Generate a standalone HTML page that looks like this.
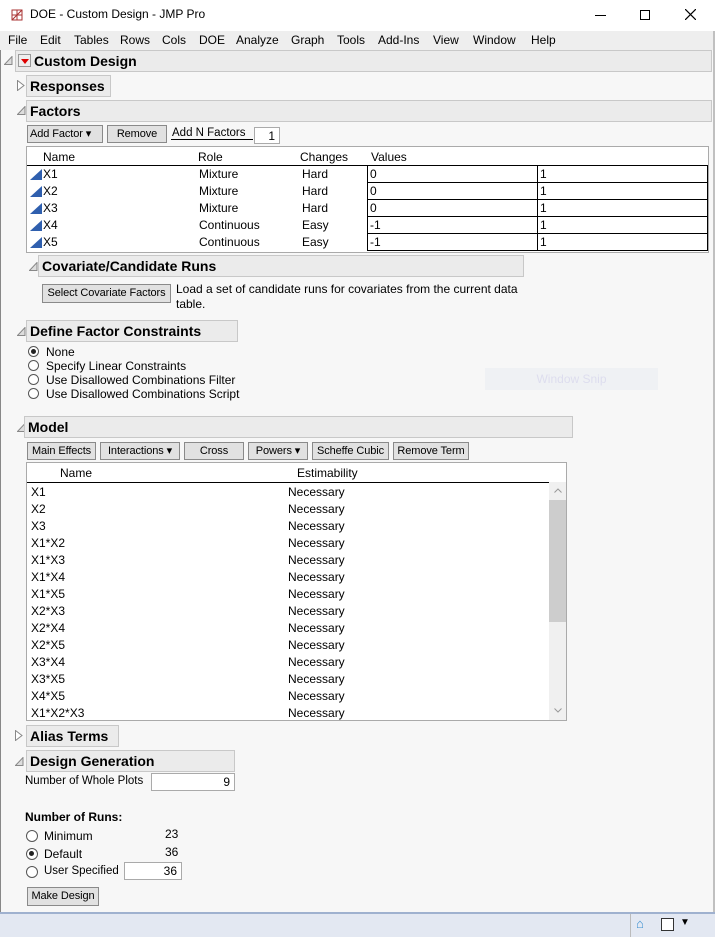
<!DOCTYPE html>
<html><head><meta charset="utf-8"><style>
*{margin:0;padding:0;box-sizing:border-box}
body{width:715px;height:937px;overflow:hidden;background:#f7f7f7;font-family:"Liberation Sans",sans-serif;font-size:12px;color:#000;position:relative}
.a{position:absolute;white-space:nowrap}
.hdr{position:absolute;background:#ebebeb;border:1px solid #c8c8c8;font-weight:bold;font-size:14px;padding-left:3px;line-height:19px;white-space:nowrap}
.btn{position:absolute;background:#e1e1e1;border:1px solid #8a8a8a;line-height:16px;text-align:center;font-size:11px;white-space:nowrap;overflow:hidden;letter-spacing:-0.1px}
.inp{position:absolute;background:#fff;border:1px solid #aaa;text-align:right;padding-right:4px;line-height:16px}
.rad{position:absolute;width:11px;height:11px;border:1px solid #555;border-radius:50%;background:#fff}
.rad.on::after{content:"";position:absolute;left:2px;top:2px;width:5px;height:5px;border-radius:50%;background:#222}
.tg{position:absolute}
</style></head><body>
<div class="a" style="left:0;top:0;width:715px;height:31px;background:#fff"></div>
<svg class="a" style="left:10px;top:8px" width="14" height="14" viewBox="0 0 14 14"><rect x="2" y="2" width="10" height="10" fill="none" stroke="#a33" stroke-width="1"/><path d="M2 7h10M7 2v10M2 12L12 2" stroke="#a33" fill="none"/></svg>
<div class="a" style="left:30px;top:7px;font-size:12px">DOE - Custom Design - JMP Pro</div>
<div class="a" style="left:595px;top:15px;width:11px;height:1px;background:#000"></div>
<div class="a" style="left:640px;top:10px;width:10px;height:10px;border:1px solid #000"></div>
<svg class="a" style="left:685px;top:9px" width="11" height="11"><path d="M0 0L11 11M11 0L0 11" stroke="#000" stroke-width="1.2"/></svg>
<div class="a" style="left:0;top:31px;width:715px;height:19px;background:#eeeeee"></div>
<div class="a" style="left:8px;top:33px">File</div>
<div class="a" style="left:40px;top:33px">Edit</div><div class="a" style="left:74px;top:33px">Tables</div><div class="a" style="left:120px;top:33px">Rows</div><div class="a" style="left:162px;top:33px">Cols</div><div class="a" style="left:199px;top:33px">DOE</div><div class="a" style="left:236px;top:33px">Analyze</div><div class="a" style="left:291px;top:33px">Graph</div><div class="a" style="left:337px;top:33px">Tools</div><div class="a" style="left:378px;top:33px">Add-Ins</div><div class="a" style="left:433px;top:33px">View</div><div class="a" style="left:473px;top:33px">Window</div><div class="a" style="left:531px;top:33px">Help</div>
<div class="a" style="left:713px;top:31px;width:2px;height:882px;background:#c0c0c0"></div>
<div class="a" style="left:0;top:50px;width:1px;height:863px;background:#888"></div>

<svg class="tg" style="left:4px;top:56px" width="9" height="9"><path d="M8 0.5V8.5H0.5Z" fill="#ddd" stroke="#888"/></svg>
<div class="hdr" style="left:15px;top:50px;width:697px;height:22px;padding-left:18px;line-height:20px">Custom Design</div>
<div class="a" style="left:18px;top:54px;width:13px;height:13px;border:1px solid #999;background:#eee"><div style="margin:4px 0 0 2px;width:0;height:0;border-left:4px solid transparent;border-right:4px solid transparent;border-top:5px solid #d00"></div></div>

<svg class="tg" style="left:17px;top:80px" width="8" height="11"><path d="M0.5 0.5L7 5.5L0.5 10.5Z" fill="#fff" stroke="#888"/></svg>
<div class="hdr" style="left:26px;top:75px;width:85px;height:22px;line-height:20px">Responses</div>
<svg class="tg" style="left:17px;top:106px" width="9" height="9"><path d="M8 0.5V8.5H0.5Z" fill="#ddd" stroke="#888"/></svg>
<div class="hdr" style="left:26px;top:100px;width:686px;height:22px;line-height:20px">Factors</div>

<div class="btn" style="left:27px;top:125px;width:76px;height:18px;text-align:left;padding-left:2px">Add Factor ▾</div>
<div class="btn" style="left:107px;top:125px;width:60px;height:18px">Remove</div>
<div class="a" style="left:171px;top:127px;border-bottom:1px solid #000;width:82px;padding-left:1px;font-size:11.5px">Add N Factors</div>
<div class="inp" style="left:254px;top:127px;width:26px;height:17px">1</div>

<div class="a" style="left:26px;top:146px;width:683px;height:107px;background:#fff;border:1px solid #aaa"></div>
<div class="a" style="left:43px;top:150px">Name</div><div class="a" style="left:198px;top:150px">Role</div><div class="a" style="left:300px;top:150px">Changes</div><div class="a" style="left:371px;top:150px">Values</div>
<div class="a" style="left:27px;top:165px;width:681px;height:1px;background:#000"></div>
<div class="a" style="left:30px;top:166px;line-height:17px">
<div style="position:relative;height:17px"><span style="position:absolute;left:0;top:3px;width:0;height:0;border-left:12px solid transparent;border-bottom:11px solid #2f5fae"></span><span style="position:absolute;left:13px">X1</span><span style="position:absolute;left:169px">Mixture</span><span style="position:absolute;left:272px">Hard</span></div>
<div style="position:relative;height:17px"><span style="position:absolute;left:0;top:3px;width:0;height:0;border-left:12px solid transparent;border-bottom:11px solid #2f5fae"></span><span style="position:absolute;left:13px">X2</span><span style="position:absolute;left:169px">Mixture</span><span style="position:absolute;left:272px">Hard</span></div>
<div style="position:relative;height:17px"><span style="position:absolute;left:0;top:3px;width:0;height:0;border-left:12px solid transparent;border-bottom:11px solid #2f5fae"></span><span style="position:absolute;left:13px">X3</span><span style="position:absolute;left:169px">Mixture</span><span style="position:absolute;left:272px">Hard</span></div>
<div style="position:relative;height:17px"><span style="position:absolute;left:0;top:3px;width:0;height:0;border-left:12px solid transparent;border-bottom:11px solid #2f5fae"></span><span style="position:absolute;left:13px">X4</span><span style="position:absolute;left:169px">Continuous</span><span style="position:absolute;left:272px">Easy</span></div>
<div style="position:relative;height:17px"><span style="position:absolute;left:0;top:3px;width:0;height:0;border-left:12px solid transparent;border-bottom:11px solid #2f5fae"></span><span style="position:absolute;left:13px">X5</span><span style="position:absolute;left:169px">Continuous</span><span style="position:absolute;left:272px">Easy</span></div>
</div>
<div class="a" style="left:367px;top:165px;width:341px;height:86px;border:1px solid #000;border-top:0"></div>
<div class="a" style="left:537px;top:165px;width:1px;height:86px;background:#000"></div>
<div class="a" style="left:367px;top:182px;width:341px;height:1px;background:#000"></div>
<div class="a" style="left:367px;top:199px;width:341px;height:1px;background:#000"></div>
<div class="a" style="left:367px;top:216px;width:341px;height:1px;background:#000"></div>
<div class="a" style="left:367px;top:233px;width:341px;height:1px;background:#000"></div>
<div class="a" style="left:370px;top:166px;line-height:17px">0<br>0<br>0<br>-1<br>-1</div>
<div class="a" style="left:540px;top:166px;line-height:17px">1<br>1<br>1<br>1<br>1</div>

<svg class="tg" style="left:29px;top:262px" width="9" height="9"><path d="M8 0.5V8.5H0.5Z" fill="#ddd" stroke="#888"/></svg>
<div class="hdr" style="left:38px;top:255px;width:486px;height:22px;line-height:20px">Covariate/Candidate Runs</div>
<div class="btn" style="left:42px;top:284px;width:129px;height:19px;line-height:17px">Select Covariate Factors</div>
<div class="a" style="left:176px;top:282px;line-height:15px">Load a set of candidate runs for covariates from the current data<br>table.</div>

<svg class="tg" style="left:17px;top:327px" width="9" height="9"><path d="M8 0.5V8.5H0.5Z" fill="#ddd" stroke="#888"/></svg>
<div class="hdr" style="left:26px;top:320px;width:212px;height:22px;line-height:20px">Define Factor Constraints</div>
<div class="rad on" style="left:28px;top:346px"></div><div class="a" style="left:46px;top:345px">None</div>
<div class="rad" style="left:28px;top:360px"></div><div class="a" style="left:46px;top:359px">Specify Linear Constraints</div>
<div class="rad" style="left:28px;top:374px"></div><div class="a" style="left:46px;top:373px">Use Disallowed Combinations Filter</div>
<div class="rad" style="left:28px;top:388px"></div><div class="a" style="left:46px;top:387px">Use Disallowed Combinations Script</div>
<div class="a" style="left:485px;top:368px;width:173px;height:22px;background:#eff1f4;color:#dde;line-height:22px;text-align:center">Window Snip</div>

<svg class="tg" style="left:17px;top:423px" width="9" height="9"><path d="M8 0.5V8.5H0.5Z" fill="#ddd" stroke="#888"/></svg>
<div class="hdr" style="left:24px;top:416px;width:549px;height:22px;line-height:20px">Model</div>
<div class="btn" style="left:27px;top:442px;width:69px;height:18px">Main Effects</div>
<div class="btn" style="left:100px;top:442px;width:80px;height:18px">Interactions ▾</div>
<div class="btn" style="left:184px;top:442px;width:60px;height:18px">Cross</div>
<div class="btn" style="left:248px;top:442px;width:60px;height:18px">Powers ▾</div>
<div class="btn" style="left:312px;top:442px;width:77px;height:18px">Scheffe Cubic</div>
<div class="btn" style="left:393px;top:442px;width:76px;height:18px">Remove Term</div>

<div class="a" style="left:26px;top:462px;width:541px;height:259px;background:#fff;border:1px solid #aaa;overflow:hidden">
<div class="a" style="left:33px;top:3px">Name</div><div class="a" style="left:270px;top:3px">Estimability</div>
<div class="a" style="left:0;top:19px;width:522px;height:1px;background:#000"></div>
<div class="a" style="left:4px;top:21px;line-height:17px">X1<br>X2<br>X3<br>X1*X2<br>X1*X3<br>X1*X4<br>X1*X5<br>X2*X3<br>X2*X4<br>X2*X5<br>X3*X4<br>X3*X5<br>X4*X5<br>X1*X2*X3</div>
<div class="a" style="left:261px;top:21px;line-height:17px">Necessary<br>Necessary<br>Necessary<br>Necessary<br>Necessary<br>Necessary<br>Necessary<br>Necessary<br>Necessary<br>Necessary<br>Necessary<br>Necessary<br>Necessary<br>Necessary</div>
<div class="a" style="left:522px;top:19px;width:17px;height:240px;background:#f0f0f0"></div>
<div class="a" style="left:522px;top:37px;width:17px;height:122px;background:#cdcdcd"></div>
<svg class="a" style="left:527px;top:25px" width="8" height="5"><path d="M0.5 4.5L4 1L7.5 4.5" stroke="#999" fill="none"/></svg>
<svg class="a" style="left:527px;top:245px" width="8" height="5"><path d="M0.5 0.5L4 4L7.5 0.5" stroke="#999" fill="none"/></svg>
</div>

<svg class="tg" style="left:15px;top:730px" width="8" height="11"><path d="M0.5 0.5L7 5.5L0.5 10.5Z" fill="#fff" stroke="#888"/></svg>
<div class="hdr" style="left:26px;top:725px;width:93px;height:22px;line-height:20px">Alias Terms</div>
<svg class="tg" style="left:15px;top:757px" width="9" height="9"><path d="M8 0.5V8.5H0.5Z" fill="#ddd" stroke="#888"/></svg>
<div class="hdr" style="left:26px;top:750px;width:209px;height:22px;line-height:20px">Design Generation</div>
<div class="a" style="left:25px;top:775px;font-size:11.5px">Number of Whole Plots</div>
<div class="inp" style="left:151px;top:773px;width:84px;height:18px">9</div>
<div class="a" style="left:25px;top:810px;font-weight:bold">Number of Runs:</div>
<div class="rad" style="left:26px;top:830px;width:12px;height:12px"></div><div class="a" style="left:44px;top:829px">Minimum</div><div class="a" style="left:165px;top:827px">23</div>
<div class="rad on" style="left:26px;top:848px;width:12px;height:12px"></div><div class="a" style="left:44px;top:847px">Default</div><div class="a" style="left:165px;top:845px">36</div>
<div class="rad" style="left:26px;top:866px;width:12px;height:12px"></div><div class="a" style="left:44px;top:865px;font-size:11.5px">User Specified</div>
<div class="inp" style="left:124px;top:862px;width:58px;height:18px">36</div>
<div class="btn" style="left:27px;top:887px;width:72px;height:19px;line-height:17px">Make Design</div>

<div class="a" style="left:0;top:912px;width:715px;height:2px;background:#9fb1cf"></div>
<div class="a" style="left:0;top:914px;width:715px;height:23px;background:#e3e8f2"></div>
<div class="a" style="left:630px;top:914px;width:1px;height:23px;background:#bbb"></div>
<div class="a" style="left:636px;top:916px;color:#3a8fd0;font-size:13px">⌂</div>
<div class="a" style="left:661px;top:918px;width:13px;height:13px;background:#fff;border:1px solid #333"></div>
<div class="a" style="left:680px;top:917px;font-size:10px">▼</div>
</body></html>
